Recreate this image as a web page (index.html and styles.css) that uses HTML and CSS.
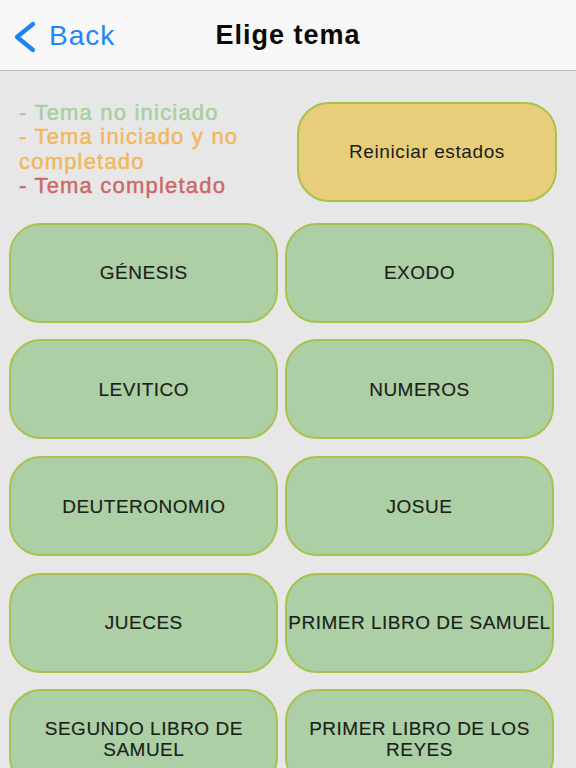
FILE: index.html
```html
<!DOCTYPE html>
<html lang="es">
<head>
<meta charset="utf-8">
<title>Elige tema</title>
<link rel="stylesheet" href="styles.css">
</head>
<body>
<header class="nav">
  <a class="back" href="#">
    <svg class="chev" width="26" height="34" viewBox="0 0 26 34" aria-hidden="true">
      <path d="M21 4 L5 17 L21 30" fill="none" stroke="#1a84f6" stroke-width="4.2" stroke-linecap="round" stroke-linejoin="round"/>
    </svg>
    <span class="back-label">Back</span>
  </a>
  <h1 class="title">Elige tema</h1>
  <span class="spacer"></span>
</header>
<main class="content">
  <section class="top">
    <div class="legend">
      <div class="l-green">- Tema no iniciado</div>
      <div class="l-orange">- Tema iniciado y no completado</div>
      <div class="l-red">- Tema completado</div>
    </div>
    <button class="reset">Reiniciar estados</button>
  </section>
  <section class="grid">
    <button class="topic">GÉNESIS</button>
    <button class="topic">EXODO</button>
    <button class="topic">LEVITICO</button>
    <button class="topic">NUMEROS</button>
    <button class="topic">DEUTERONOMIO</button>
    <button class="topic">JOSUE</button>
    <button class="topic">JUECES</button>
    <button class="topic">PRIMER LIBRO DE SAMUEL</button>
    <button class="topic">SEGUNDO LIBRO DE SAMUEL</button>
    <button class="topic">PRIMER LIBRO DE LOS REYES</button>
  </section>
</main>
</body>
</html>
```
FILE: styles.css
```css
html, body {
  margin: 0;
  padding: 0;
}
body {
  background: #e7e7e7;
  font-family: "Liberation Sans", Arial, sans-serif;
  overflow: hidden;
  height: 768px;
}
.nav {
  height: 70px;
  background: #f7f7f7;
  border-bottom: 1px solid #b9b9b9;
  display: grid;
  grid-template-columns: 1fr auto 1fr;
  align-items: center;
}
.back {
  display: flex;
  align-items: center;
  text-decoration: none;
  padding-left: 12px;
  padding-top: 2px;
}
.chev {
  display: block;
  margin-top: 2px;
}
.back-label {
  margin-left: 11px;
  color: #1f86f5;
  font-size: 28px;
  letter-spacing: 1px;
}
.title {
  margin: 0;
  font-size: 27px;
  font-weight: bold;
  letter-spacing: 1px;
  color: #0a0a0a;
  padding-top: 1px;
}
.top {
  display: flex;
  align-items: center;
  padding: 31px 19px 0 19px;
}
.legend {
  flex: 1;
  font-size: 22px;
  line-height: 24.5px;
  letter-spacing: 1.2px;
  padding-right: 30px;
  margin-top: -5px;
  -webkit-text-stroke: 0.45px currentColor;
}
.l-green { color: #a6d09f; }
.l-orange { color: #f1b85c; }
.l-red { color: #cd6868; }
.reset {
  width: 260px;
  height: 100px;
  box-sizing: border-box;
  border: 2px solid #a8c24e;
  border-radius: 32px;
  background: #e8cd7b;
  font-family: "Liberation Sans", Arial, sans-serif;
  font-size: 19px;
  letter-spacing: 0.6px;
  color: #1c1c1c;
  padding: 0;
}
.grid {
  display: grid;
  grid-template-columns: 1fr 1fr;
  column-gap: 6.7px;
  row-gap: 16.67px;
  padding: 20.7px 22px 0 9.3px;
}
.topic {
  height: 100px;
  box-sizing: border-box;
  border: 2px solid #a8c24e;
  border-radius: 32px;
  background: #accfa6;
  font-family: "Liberation Sans", Arial, sans-serif;
  font-size: 19px;
  line-height: 21px;
  letter-spacing: 0.5px;
  color: #1a2119;
  padding: 0;
  text-align: center;
  -webkit-text-stroke: 0.15px currentColor;
}
```
